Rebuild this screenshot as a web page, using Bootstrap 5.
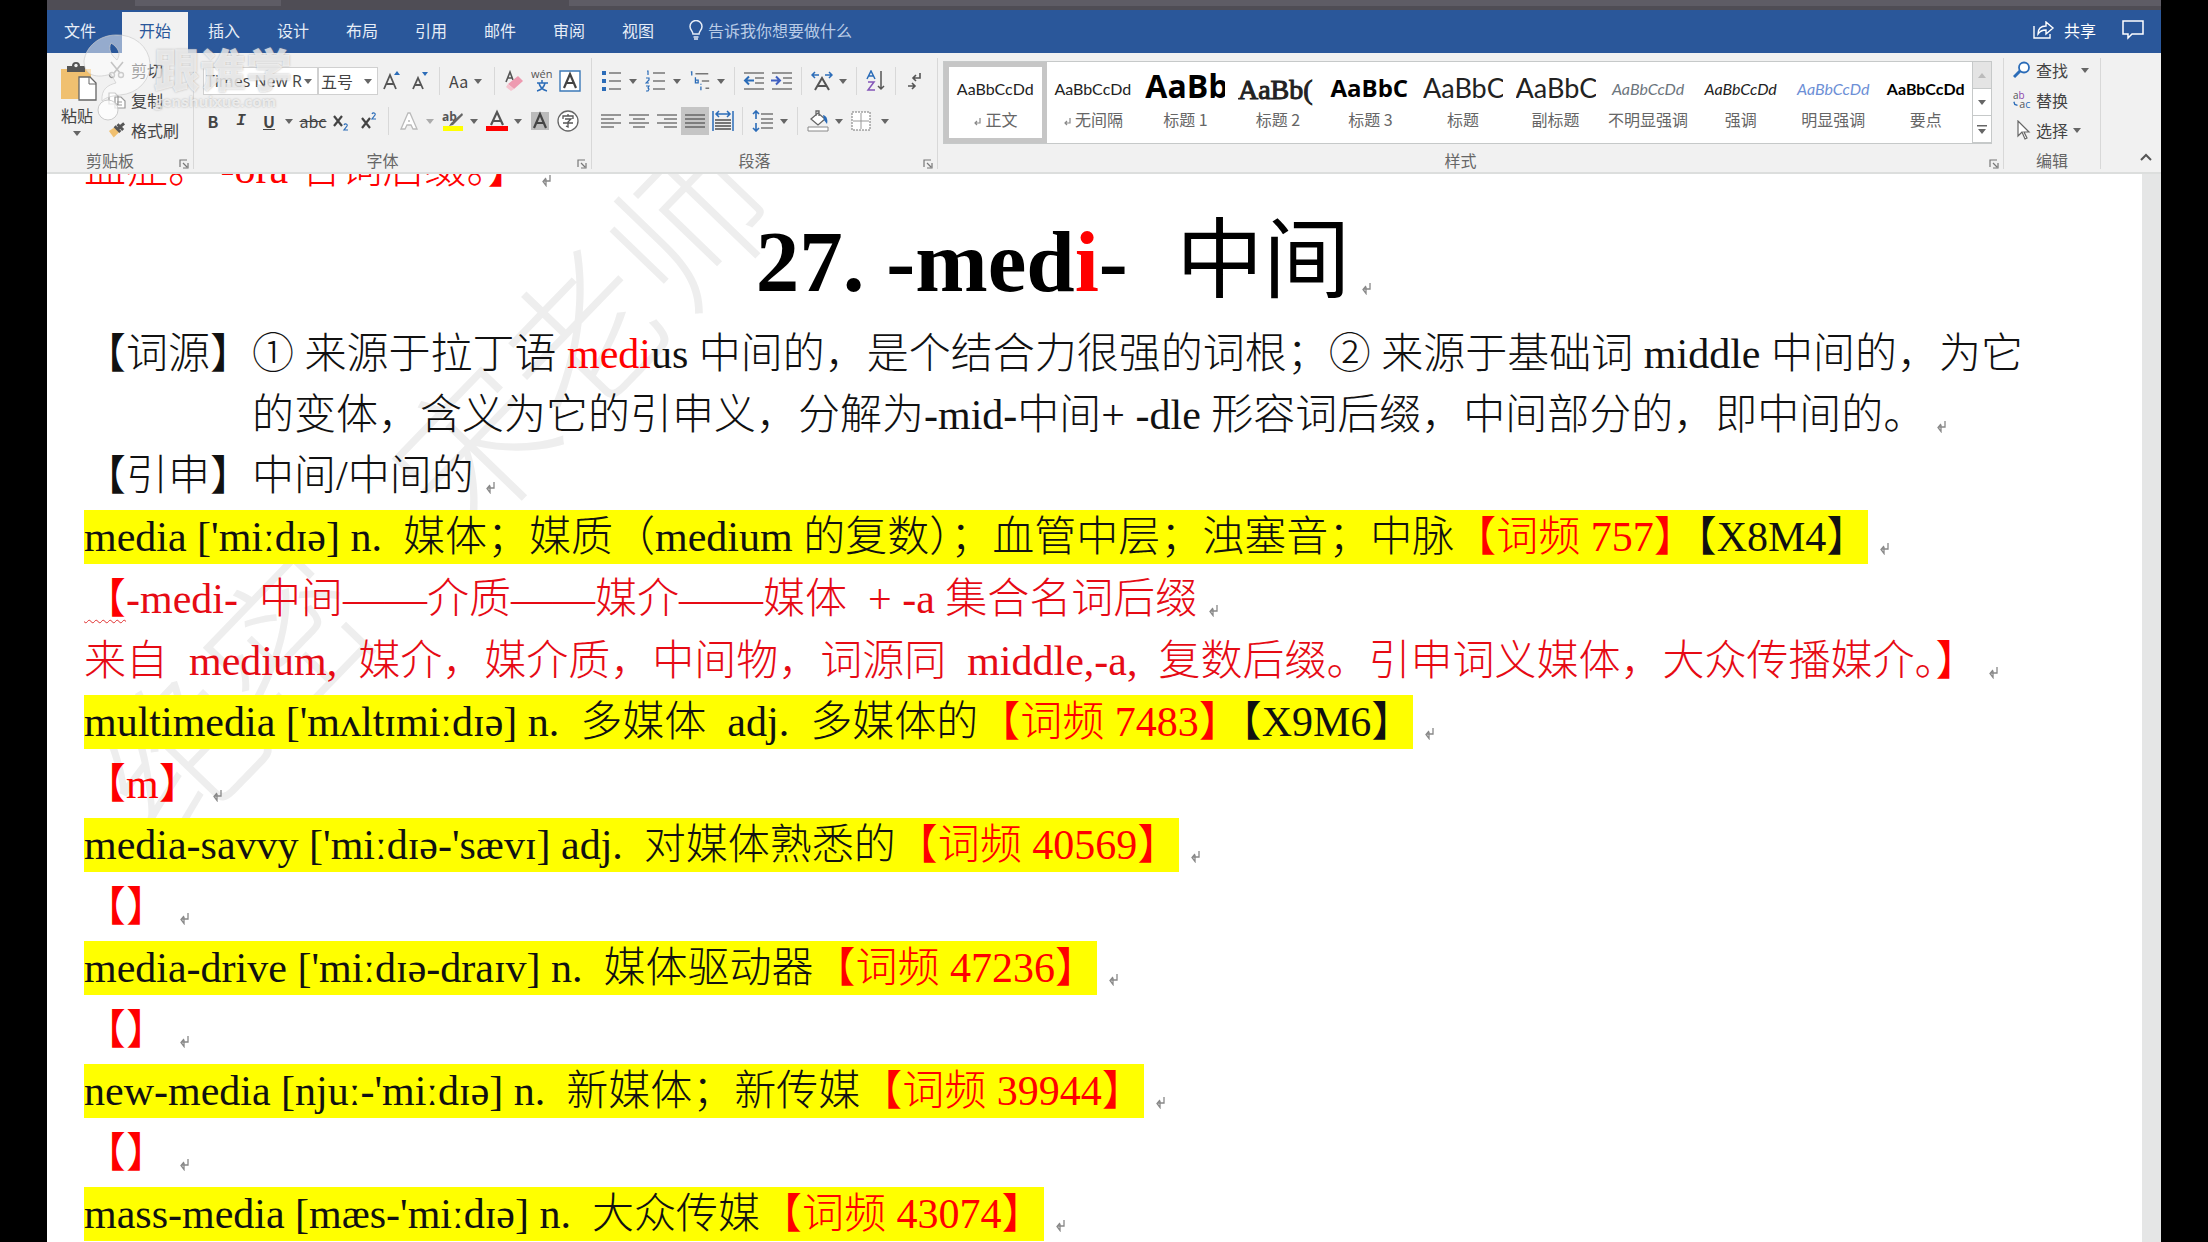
<!DOCTYPE html>
<html lang="zh-CN">
<head>
<meta charset="utf-8">
<meta name="viewport" content="width=device-width, initial-scale=1">
<title>27. -medi- 中间</title>
<link href="https://cdn.jsdelivr.net/npm/bootstrap@5.3.0/dist/css/bootstrap.min.css" rel="stylesheet">
<style>
  body { background: #000; font-family: "Noto Sans CJK SC", sans-serif; font-size: 16px; line-height: 24px; color: #444; }
  .app-shell { margin: 0 47px; height: 100vh; overflow: hidden; background: #f1f1f1; }
  button { color: inherit; line-height: inherit; }

  .title-strip { height: 10px; background: #4f4d55; }
  .title-strip span { height: 6px; background: #5e5c65; }
  .title-strip .strip-a { width: 146px; margin-left: 88px; }
  .title-strip .strip-b { margin-left: 288px; }

  .tab-bar { background: #2a579a; height: 43px; color: #fff; }
  .tab-bar .nav { gap: 3px; }
  .tab-bar .nav-link { width: 66px; height: 41px; padding: 0; line-height: 36px; text-align: center; color: #e6edf7; border-radius: 0; }
  .tab-bar .nav-link.active { background: #f1f1f1; color: #2a579a; }
  .tab-bar .file-tab { margin-right: 6px; }
  .tell-me { color: #b9cbe6; margin-left: 18px; }
  .share-area { gap: 26px; padding-right: 16px; }
  .tab-bar .rib-tool { height: 40px; align-self: flex-start; }

  .ribbon { height: 121px; border-bottom: 2px solid #dcdedd; }
  .rib-group { position: relative; padding: 3px 5px 0; border-right: 1px solid #d8d8d8; margin: 5px 0; height: 111px; }
  .rib-label { height: 24px; margin-top: 7px; padding-right: 20px; text-align: center; color: #666; }
  .rib-launch { position: absolute; right: 4px; bottom: 0; width: 10px; height: 10px; }
  .rib-row { height: 40px; }
  .rib-btn { width: 28px; height: 28px; padding: 0; border: 0; background: none; display: flex; align-items: center; justify-content: center; }
  .rib-btn.wide { width: 44px; gap: 6px; justify-content: flex-start; padding-left: 4px; }
  .rib-btn.pressed { background: #c5c5c5; }
  .rib-btn svg, .rib-tool svg { flex: none; }
  .rib-sep { width: 1px; height: 28px; margin: 0 5px; background: #d8d8d8; }
  .caret { width: 0; height: 0; border: 4px solid transparent; border-top: 5px solid #666; border-bottom: 0; flex: none; }
  .rib-tool { border: 0; background: none; padding: 0; height: 30px; display: flex; align-items: center; gap: 5px; white-space: nowrap; }
  .rib-stack { height: 80px; }
  .rib-stack .tool-col { margin-top: -6px; }
  .rib-input { height: 28px; border: 1px solid #d0d0d0; background: #fff; border-radius: 0; appearance: none; padding: 0 2px; font-size: 16px; line-height: 24px; color: #444; }
  .rib-pick { position: relative; }
  .rib-pick .caret { position: absolute; right: 6px; top: 12px; pointer-events: none; }
  .pick-face { width: 115px; font-family: "Open Sans", sans-serif; }
  .pick-size { width: 60px; }

  .clip-group { width: 147px; }
  .paste-btn { width: 50px; border: 0; background: none; padding: 0; display: flex; flex-direction: column; align-items: center; margin-right: 6px; }
  .paste-btn .caret { margin-top: 4px; }
  .font-group { width: 398px; }
  .para-group { width: 346px; }
  .style-group { width: 1066px; }
  .edit-group { width: 97px; }
  .edit-group .rib-label { padding-right: 0; }
  .style-group .rib-label { margin-top: 4px; }

  .gallery { height: 83px; border: 1px solid #c6c9c9; background: #fff; margin-right: 6px; }
  .gal-item { flex: 1 1 0; min-width: 0; border: 0; background: none; padding: 0; height: 81px; display: flex; flex-direction: column; align-items: center; color: #666; white-space: nowrap; }
  .gal-item.chosen { border: 5px solid #c6c6c6; }
  .gal-item.chosen .gal-sample { height: 40px; line-height: 44px; }
  .gal-sample { height: 45px; width: 80px; overflow: hidden; text-align: center; font: 16px/54px "Lato", sans-serif; color: #222; }
  .gal-sample.h-one { font: bold 32px/48px "Open Sans", sans-serif; color: #000; text-align: left; }
  .gal-sample.h-two { font: 28px/56px "Liberation Serif", serif; -webkit-text-stroke: 1px #222; text-align: left; }
  .gal-sample.h-three { font: bold 24px/52px "Open Sans", sans-serif; color: #000; text-align: left; }
  .gal-sample.h-title { font: 27px/52px "Lato", sans-serif; text-align: left; }
  .tone-blue { color: #6d8fd6; }
  .gal-scroll { width: 19px; border-left: 1px solid #c6c9c9; }
  .gal-scroll button { border: 0; border-bottom: 1px solid #c6c9c9; background: #fff; height: 27px; padding: 0; display: flex; align-items: center; justify-content: center; }
  .gal-scroll button:first-child { background: #e4e4e4; }

  .doc-wrap { background: #e5e6e6; padding-right: 19px; height: 1068px; }
  .doc-page { position: relative; height: 100%; overflow: hidden; background: #fff; padding: 0 107px 0 37px; font: 42px/61px "Liberation Serif", "Noto Sans CJK SC", serif; color: #111; }
  .doc-page p { margin: 0; white-space: pre; font-weight: 300; position: relative; }
  .doc-page .carry-line { margin-top: -35px; }
  .doc-page h1 { margin: 0; padding-left: 8px; font: bold 87px/124px "Liberation Serif", "Noto Sans CJK SC", serif; color: #000; text-align: center; white-space: pre; position: relative; }
  .doc-page h1 .cjk-head { font-weight: 400; margin-left: 5px; }
  .doc-page .hang { padding-left: 168px; text-indent: -168px; }
  .doc-page .note-line { line-height: 62px; color: #e60a14; }
  .doc-page .ink-red { color: #f00; }
  .hi { background: #ff0; padding: 4px 0; }
  .squiggle { text-decoration: underline wavy #e03030 1px; text-underline-offset: 6px; }
  .para-mark { width: 9px; height: 13px; margin-left: 12px; vertical-align: -4px; }
  .doc-mark { position: absolute; left: 142px; top: 535px; transform: rotate(-46deg); transform-origin: 0 100%; font-size: 156px; line-height: 160px; font-weight: 300; color: #eee; white-space: nowrap; }
  .doc-mark span { margin-left: 110px; }

  .brand { position: absolute; left: 82px; top: 34px; pointer-events: none; }
  .brand-words { left: 72px; top: 9px; position: absolute; color: rgba(255,255,255,.7); text-shadow: 0 0 2px rgba(130,130,130,.6); font-weight: 900; white-space: nowrap; }
  .brand-name { font-size: 46px; line-height: 48px; }
  .brand-url { font: bold 15px/20px "Open Sans", sans-serif; }
</style>
<script src="https://cdn.jsdelivr.net/npm/bootstrap@5.3.0/dist/js/bootstrap.bundle.min.js" defer></script>
</head>
<body>
<svg class="d-none" aria-hidden="true">
  <symbol id="pm" viewBox="0 0 9 13"><path d="M8 1v6H2M4 4L1 7.500l3 4V5" fill="none" stroke="#888" stroke-width="1.300"/></symbol>
  <symbol id="launch" viewBox="0 0 10 10"><path d="M1 8V1h7M4 4l4 4M9 4v5H4" fill="none" stroke="#777" stroke-width="1.200"/></symbol>
  <symbol id="ret" viewBox="0 0 9 10"><path d="M7 1v5H2M4 4L2 6l2 2" fill="none" stroke="#888" stroke-width="1.200"/></symbol>
</svg>
<div class="app-shell d-flex flex-column">
  <div class="title-strip d-flex"><span class="strip-a"></span><span class="strip-b flex-grow-1"></span></div>

  <header class="tab-bar d-flex align-items-center flex-shrink-0">
    <nav class="nav align-self-end flex-nowrap" aria-label="功能区">
      <a class="nav-link file-tab" href="#">文件</a>
      <a class="nav-link active" href="#">开始</a>
      <a class="nav-link" href="#">插入</a>
      <a class="nav-link" href="#">设计</a>
      <a class="nav-link" href="#">布局</a>
      <a class="nav-link" href="#">引用</a>
      <a class="nav-link" href="#">邮件</a>
      <a class="nav-link" href="#">审阅</a>
      <a class="nav-link" href="#">视图</a>
    </nav>
    <button class="rib-tool tell-me">
      <svg width="14" height="20" viewBox="0 0 14 20"><path d="M4 14c0-3-3-4-3-7.500a6 6 0 0 1 12 0C13 10 10 11 10 14zM4.500 17h5M5 19h4" fill="none" stroke="#e6edf7" stroke-width="1.500"/></svg>
      <span>告诉我你想要做什么</span>
    </button>
    <div class="share-area d-flex ms-auto align-self-start">
      <button class="rib-tool text-white">
        <svg width="22" height="18" viewBox="0 0 22 18"><path d="M1 5v12h16v-4M5 13c0-5 3-8 8-8V1l7 6-7 6V9c-4 0-6 1-8 4z" fill="none" stroke="#fff" stroke-width="1.400"/></svg>
        <span class="ms-1">共享</span>
      </button>
      <button class="rib-tool" aria-label="批注">
        <svg width="23" height="20" viewBox="0 0 23 20"><path d="M1 1h20v13H10l-4 4v-4H1z" fill="none" stroke="#fff" stroke-width="1.500"/></svg>
      </button>
    </div>
  </header>

  <div class="ribbon d-flex flex-shrink-0">
    <section class="rib-group clip-group">
      <div class="rib-stack d-flex">
        <button class="paste-btn">
          <svg width="40" height="42" viewBox="0 0 40 42"><path d="M4 8h30v30H4z" fill="#f0c070"/><path d="M10 5h5a4 4 0 0 1 8 0h5v6H10z" fill="#555"/><circle cx="19" cy="4.500" r="1.700" fill="#f1f1f1"/><path d="M22 16h11l6 6v17H22z" fill="#fff" stroke="#666" stroke-width="1.300"/><path d="M32 16v7h7" fill="none" stroke="#666"/></svg>
          <span>粘贴</span>
          <i class="caret"></i>
        </button>
        <div class="tool-col">
          <button class="rib-tool" disabled>
            <svg width="18" height="18" viewBox="0 0 18 18"><path d="M3 1l9 11M15 1L6 12" stroke="#888" stroke-width="1.600"/><circle cx="4" cy="14" r="2.500" fill="none" stroke="#999" stroke-width="1.400"/><circle cx="13" cy="14" r="2.500" fill="none" stroke="#999" stroke-width="1.400"/></svg>剪切
          </button>
          <button class="rib-tool" disabled>
            <svg width="18" height="18" viewBox="0 0 18 18"><path d="M1 2h6l3 3v8H1zM7 6h6l4 4v7H7zM9 11h5M9 14h5" fill="#fff" stroke="#999" stroke-width="1.200"/></svg>复制
          </button>
          <button class="rib-tool">
            <svg width="18" height="18" viewBox="0 0 19 18"><path d="M1 10l6-4 5 5-6 6z" fill="#f0c070"/><path d="M7 5l6 6M11 7l6-5M10 3l6 6" stroke="#555" stroke-width="3"/></svg>格式刷
          </button>
        </div>
      </div>
      <div class="rib-label">剪贴板</div>
      <svg class="rib-launch"><use href="#launch"/></svg>
    </section>

    <section class="rib-group font-group">
      <div class="rib-row d-flex align-items-center">
        <div class="rib-pick ms-1"><select class="rib-input pick-face" aria-label="字体"><option>Times New R</option></select><i class="caret"></i></div>
        <div class="rib-pick"><select class="rib-input pick-size" aria-label="字号"><option>五号</option></select><i class="caret"></i></div>
        <button class="rib-btn" aria-label="增大字号"><svg width="20" height="22" viewBox="0 0 20 22"><path d="M2 19L8 5l6 14M4 14h8" fill="none" stroke="#555" stroke-width="1.800"/><path d="M12 5l3-4 3 4z" fill="#2b6cb8"/></svg></button>
        <button class="rib-btn" aria-label="减小字号"><svg width="18" height="22" viewBox="0 0 18 22"><path d="M2 19L7 8l5 11M4 15h6" fill="none" stroke="#555" stroke-width="1.800"/><path d="M11 2h6l-3 4z" fill="#2b6cb8"/></svg></button>
        <i class="rib-sep"></i>
        <button class="rib-btn wide" aria-label="更改大小写"><span>Aa</span><i class="caret"></i></button>
        <i class="rib-sep"></i>
        <button class="rib-btn" aria-label="清除格式"><svg width="22" height="22" viewBox="0 0 22 22"><path d="M3 12L7 2l3 8M4 8h5" fill="none" stroke="#555" stroke-width="1.600"/><path d="M5 14l10-8 5 5-9 8z" fill="#ee9ab0"/><path d="M5 14l6 5-3 2-5-4z" fill="#f6c4cf"/></svg></button>
        <button class="rib-btn" aria-label="拼音指南"><svg width="22" height="24" viewBox="0 0 22 24"><text x="0" y="9" font-size="11" fill="#555" font-family="Open Sans">wén</text><path d="M6 14h11M11 11v3M8 14c1 5 4 7 8 8M14 14c-1 5-4 7-8 8" fill="none" stroke="#2b6cb8" stroke-width="1.500"/></svg></button>
        <button class="rib-btn" aria-label="字符边框"><svg width="22" height="22" viewBox="0 0 22 22"><path d="M1 1h20v20H1z" fill="#fff" stroke="#3d7ab8" stroke-width="1.400"/><path d="M5 18l6-14 6 14M7 13h8" fill="none" stroke="#444" stroke-width="2.200"/></svg></button>
      </div>
      <div class="rib-row d-flex align-items-center">
        <button class="rib-btn fw-bold">B</button>
        <button class="rib-btn fst-italic fw-bold font-monospace">I</button>
        <button class="rib-btn wide"><b class="text-decoration-underline ms-1">U</b><i class="caret ms-1"></i></button>
        <button class="rib-btn"><s>abc</s></button>
        <button class="rib-btn" aria-label="下标"><svg width="18" height="20" viewBox="0 0 18 20"><path d="M2 5l8 10M10 5L2 15" stroke="#444" stroke-width="2.200"/><path d="M12 14c1-2 4-1 3 1l-3 4h4" fill="none" stroke="#2b6cb8" stroke-width="1.200"/></svg></button>
        <button class="rib-btn" aria-label="上标"><svg width="18" height="20" viewBox="0 0 18 20"><path d="M2 7l8 10M10 7L2 17" stroke="#444" stroke-width="2.200"/><path d="M12 3c1-2 4-1 3 1l-3 4h4" fill="none" stroke="#2b6cb8" stroke-width="1.200"/></svg></button>
        <i class="rib-sep"></i>
        <button class="rib-btn wide" aria-label="文本效果"><svg width="22" height="22" viewBox="0 0 22 22"><path d="M3 19L10 3h2l7 16h-4l-2-4H9l-2 4zM10 11h2" fill="#fff" stroke="#bbb" stroke-width="1.300"/></svg><i class="caret opacity-50"></i></button>
        <button class="rib-btn wide" aria-label="突出显示"><svg width="22" height="24" viewBox="0 0 22 24"><text x="0" y="12" font-size="12" font-weight="bold" fill="#555" font-family="Open Sans">ab</text><path d="M20 4L9 14l-2 3 4-1L21 6z" fill="#666"/><path d="M1 17h20v5H1z" fill="#ff0"/></svg><i class="caret"></i></button>
        <button class="rib-btn wide" aria-label="字体颜色"><svg width="22" height="24" viewBox="0 0 22 24"><path d="M5 16l6-13 6 13M7 12h8" fill="none" stroke="#555" stroke-width="2.200"/><path d="M0 17h22v5H0z" fill="#f00"/></svg><i class="caret"></i></button>
        <button class="rib-btn" aria-label="字符底纹"><svg width="20" height="20" viewBox="0 0 20 20"><path d="M1 1h18v18H1z" fill="#bbb"/><path d="M4 17l6-14 6 14M6 12h8" fill="none" stroke="#444" stroke-width="2.200"/></svg></button>
        <button class="rib-btn" aria-label="带圈字符"><svg width="22" height="22" viewBox="0 0 22 22"><circle cx="11" cy="11" r="10" fill="#fff" stroke="#666" stroke-width="1.300"/><path d="M11 4v2M6 9V6h10v3M8 9h6l-3 3v5l-2-1M6 13h10" fill="none" stroke="#555" stroke-width="1.300"/></svg></button>
      </div>
      <div class="rib-label">字体</div>
      <svg class="rib-launch"><use href="#launch"/></svg>
    </section>

    <section class="rib-group para-group">
      <div class="rib-row d-flex align-items-center">
        <button class="rib-btn wide" aria-label="项目符号"><svg width="22" height="22" viewBox="0 0 22 22"><path d="M8 3h12M8 11h12M8 19h12" stroke="#777" stroke-width="1.600"/><path d="M1 1h4v4H1zM1 9h4v4H1zM1 17h4v4H1z" fill="#2b6cb8"/></svg><i class="caret"></i></button>
        <button class="rib-btn wide" aria-label="编号"><svg width="22" height="22" viewBox="0 0 22 22"><path d="M8 3h12M8 11h12M8 19h12" stroke="#777" stroke-width="1.600"/><path d="M2 1h1v4M1 8h3v2l-3 3h3M1 16h3l-1 2 1 1-1 2H1" fill="none" stroke="#2b6cb8" stroke-width="1.200"/></svg><i class="caret"></i></button>
        <button class="rib-btn wide" aria-label="多级列表"><svg width="22" height="22" viewBox="0 0 24 22"><path d="M7 3h14M14 11h8M18 19h4" stroke="#777" stroke-width="1.600"/><path d="M2 1h1v4M7 7v6h3v-3H7M13 14v1M13 17v4" fill="none" stroke="#2b6cb8" stroke-width="1.400"/></svg><i class="caret"></i></button>
        <i class="rib-sep"></i>
        <button class="rib-btn" aria-label="减少缩进"><svg width="22" height="20" viewBox="0 0 22 20"><path d="M1 2h20M12 7h9M12 12h9M1 18h20" stroke="#777" stroke-width="1.600"/><path d="M11 9.500H2M6 5.500l-4 4 4 4" fill="none" stroke="#2b6cb8" stroke-width="2"/></svg></button>
        <button class="rib-btn" aria-label="增加缩进"><svg width="22" height="20" viewBox="0 0 22 20"><path d="M1 2h20M12 7h9M12 12h9M1 18h20" stroke="#777" stroke-width="1.600"/><path d="M0 9.500h9M5 5.500l4 4-4 4" fill="none" stroke="#3f5fc0" stroke-width="2"/></svg></button>
        <i class="rib-sep"></i>
        <button class="rib-btn wide" aria-label="中文版式"><svg width="22" height="20" viewBox="0 0 22 20"><path d="M4 19l7-12 7 12M7 15h8" fill="none" stroke="#555" stroke-width="2"/><path d="M8 4H2M4 1L1 4l3 3M14 4h6M18 1l3 3-3 3" fill="none" stroke="#2b6cb8" stroke-width="1.500"/></svg><i class="caret"></i></button>
        <i class="rib-sep"></i>
        <button class="rib-btn" aria-label="排序"><svg width="20" height="22" viewBox="0 0 20 22"><path d="M1 9l4-8 4 8M2 6h6" fill="none" stroke="#2b6cb8" stroke-width="1.500"/><path d="M2 12h6l-6 8h7" fill="none" stroke="#8456b8" stroke-width="1.500"/><path d="M15 1v18M12 16l3 3 3-3" fill="none" stroke="#555" stroke-width="1.500"/></svg></button>
        <i class="rib-sep"></i>
        <button class="rib-btn" aria-label="显示编辑标记"><svg width="16" height="20" viewBox="0 0 16 20"><path d="M13 2v5H7M9 4L6 7l3 3M1 15h7M5 12l3 3-3 3" fill="none" stroke="#555" stroke-width="1.600"/></svg></button>
      </div>
      <div class="rib-row d-flex align-items-center">
        <button class="rib-btn" aria-label="左对齐"><svg width="20" height="16" viewBox="0 0 20 16"><path d="M0 2h20M0 6h13M0 10h20M0 14h13" stroke="#777" stroke-width="1.500"/></svg></button>
        <button class="rib-btn" aria-label="居中"><svg width="20" height="16" viewBox="0 0 20 16"><path d="M0 2h20M4 6h12M0 10h20M4 14h12" stroke="#777" stroke-width="1.500"/></svg></button>
        <button class="rib-btn" aria-label="右对齐"><svg width="20" height="16" viewBox="0 0 20 16"><path d="M0 2h20M7 6h13M0 10h20M7 14h13" stroke="#777" stroke-width="1.500"/></svg></button>
        <button class="rib-btn pressed" aria-label="两端对齐"><svg width="20" height="16" viewBox="0 0 20 16"><path d="M0 2h20M0 6h20M0 10h20M0 14h20" stroke="#666" stroke-width="1.500"/></svg></button>
        <button class="rib-btn" aria-label="分散对齐"><svg width="22" height="22" viewBox="0 0 22 22"><path d="M1 1v20M21 1v20M4 4h14M7 1L4 4l3 3M15 1l3 3-3 3" fill="none" stroke="#2b6cb8" stroke-width="1.500"/><path d="M3 10h16M3 13h16M3 16h16M3 19h16" stroke="#777" stroke-width="2"/></svg></button>
        <i class="rib-sep"></i>
        <button class="rib-btn wide" aria-label="行距"><svg width="22" height="22" viewBox="0 0 22 22"><path d="M9 4h12M9 9h12M9 13h12M9 18h12" stroke="#777" stroke-width="1.500"/><path d="M4 1v8M1 4l3-3 3 3M4 13v8M1 18l3 3 3-3" fill="none" stroke="#2b6cb8" stroke-width="1.600"/></svg><i class="caret"></i></button>
        <i class="rib-sep"></i>
        <button class="rib-btn wide" aria-label="底纹"><svg width="22" height="22" viewBox="0 0 22 22"><path d="M4 9l7-6 7 6-7 6zM9 6V1h3v5" fill="#fff" stroke="#666" stroke-width="1.300"/><path d="M16 5c4 1 5 5 4 9l-3-4z" fill="#2b6cb8"/><path d="M1 17h20v4H1z" fill="#fff" stroke="#888"/></svg><i class="caret"></i></button>
        <button class="rib-btn wide" aria-label="边框"><svg width="20" height="20" viewBox="0 0 20 20"><path d="M1 1h18v18H1z" fill="#fff" stroke="#777" stroke-dasharray="2 1"/><path d="M10 2v16M2 10h16" stroke="#999"/></svg><i class="caret ms-1"></i></button>
      </div>
      <div class="rib-label">段落</div>
      <svg class="rib-launch"><use href="#launch"/></svg>
    </section>

    <section class="rib-group style-group">
      <div class="gallery d-flex">
        <button class="gal-item chosen"><span class="gal-sample">AaBbCcDd</span><span><svg width="9" height="10"><use href="#ret"/></svg> 正文</span></button>
        <button class="gal-item"><span class="gal-sample">AaBbCcDd</span><span><svg width="9" height="10"><use href="#ret"/></svg> 无间隔</span></button>
        <button class="gal-item"><span class="gal-sample h-one">AaBb</span><span>标题 1</span></button>
        <button class="gal-item"><span class="gal-sample h-two">AaBb(</span><span>标题 2</span></button>
        <button class="gal-item"><span class="gal-sample h-three">AaBbC</span><span>标题 3</span></button>
        <button class="gal-item"><span class="gal-sample h-title">AaBbC</span><span>标题</span></button>
        <button class="gal-item"><span class="gal-sample h-title">AaBbC</span><span>副标题</span></button>
        <button class="gal-item"><span class="gal-sample fst-italic text-secondary">AaBbCcDd</span><span>不明显强调</span></button>
        <button class="gal-item"><span class="gal-sample fst-italic">AaBbCcDd</span><span>强调</span></button>
        <button class="gal-item"><span class="gal-sample fst-italic tone-blue">AaBbCcDd</span><span>明显强调</span></button>
        <button class="gal-item"><span class="gal-sample fw-bold text-black">AaBbCcDd</span><span>要点</span></button>
        <div class="gal-scroll d-flex flex-column flex-shrink-0">
          <button aria-label="上一行"><svg width="8" height="5"><path d="M0 5l4-5 4 5z" fill="#bbb"/></svg></button>
          <button aria-label="下一行"><i class="caret"></i></button>
          <button aria-label="其他"><svg width="10" height="9"><path d="M0 0h10v1.500H0zM1 4h8L5 9z" fill="#666"/></svg></button>
        </div>
      </div>
      <div class="rib-label">样式</div>
      <svg class="rib-launch"><use href="#launch"/></svg>
    </section>

    <section class="rib-group edit-group">
      <div class="rib-stack ps-1 d-flex"><div class="tool-col">
        <button class="rib-tool"><svg width="18" height="18" viewBox="0 0 18 18"><circle cx="11" cy="6.500" r="5" fill="#fff" stroke="#2b6cb8" stroke-width="1.800"/><path d="M7 10l-6 6" stroke="#2b6cb8" stroke-width="3"/></svg>查找<i class="caret ms-2"></i></button>
        <button class="rib-tool"><svg width="18" height="20" viewBox="0 0 20 20"><text x="0" y="9" font-size="11" font-family="Open Sans" fill="#555">a<tspan fill="#8e44ad">b</tspan></text><text x="7" y="19" font-size="12" font-family="Open Sans" fill="#555">a<tspan fill="#2b6cb8">c</tspan></text><path d="M1 12l1 3 3 1" fill="none" stroke="#2b6cb8" stroke-width="1.500"/></svg><span>替换</span></button>
        <button class="rib-tool"><svg width="18" height="20" viewBox="0 0 18 20"><path d="M5 1v15l4-4 3 7 2-1-3-6h5z" fill="#fff" stroke="#666" stroke-width="1.200"/></svg>选择<i class="caret"></i></button>
      </div></div>
      <div class="rib-label">编辑</div>
    </section>
    <button class="rib-tool ms-auto align-self-end me-2" aria-label="折叠功能区"><svg width="14" height="9" viewBox="0 0 14 9"><path d="M2 7l5-5 5 5" fill="none" stroke="#555" stroke-width="2"/></svg></button>
  </div>

  <div class="doc-wrap flex-shrink-0">
    <main class="doc-page">
      <div class="doc-mark" aria-hidden="true">绝密<span>宋老师</span></div>
      <p class="carry-line ink-red">血症。 -ora 名词后缀。】<svg class="para-mark"><use href="#pm"/></svg></p>
      <h1>27. -med<span class="ink-red">i</span>-  <span class="cjk-head">中间</span><svg class="para-mark"><use href="#pm"/></svg></h1>
      <p class="hang">【词源】① 来源于拉丁语 <span class="ink-red">medi</span>us 中间的，是个结合力很强的词根；② 来源于基础词 middle 中间的，为它
的变体，含义为它的引申义，分解为-mid-中间+ -dle 形容词后缀，中间部分的，即中间的。<svg class="para-mark"><use href="#pm"/></svg></p>
      <p>【引申】中间/中间的<svg class="para-mark"><use href="#pm"/></svg></p>
      <p><span class="hi">media ['miːdɪə] n.  媒体；媒质（medium 的复数）；血管中层；浊塞音；中脉<span class="ink-red">【词频 757】</span>【X8M4】</span><svg class="para-mark"><use href="#pm"/></svg></p>
      <p class="note-line"><span class="squiggle ink-red">【</span>-medi-  中间——介质——媒介——媒体  + -a 集合名词后缀<svg class="para-mark"><use href="#pm"/></svg></p>
      <p class="note-line">来自  medium,  媒介，媒介质，中间物，词源同  middle,-a,  复数后缀。引申词义媒体，大众传播媒介。<span class="ink-red">】</span><svg class="para-mark"><use href="#pm"/></svg></p>
      <p><span class="hi">multimedia ['mʌltɪmiːdɪə] n.  多媒体  adj.  多媒体的<span class="ink-red">【词频 7483】</span>【X9M6】</span><svg class="para-mark"><use href="#pm"/></svg></p>
      <p class="note-line ink-red">【m】<svg class="para-mark"><use href="#pm"/></svg></p>
      <p><span class="hi">media-savvy ['miːdɪə-'sævɪ] adj.  对媒体熟悉的<span class="ink-red">【词频 40569】</span></span><svg class="para-mark"><use href="#pm"/></svg></p>
      <p class="note-line ink-red">【】<svg class="para-mark"><use href="#pm"/></svg></p>
      <p><span class="hi">media-drive ['miːdɪə-draɪv] n.  媒体驱动器<span class="ink-red">【词频 47236】</span></span><svg class="para-mark"><use href="#pm"/></svg></p>
      <p class="note-line ink-red">【】<svg class="para-mark"><use href="#pm"/></svg></p>
      <p><span class="hi">new-media [njuː-'miːdɪə] n.  新媒体；新传媒<span class="ink-red">【词频 39944】</span></span><svg class="para-mark"><use href="#pm"/></svg></p>
      <p class="note-line ink-red">【】<svg class="para-mark"><use href="#pm"/></svg></p>
      <p><span class="hi">mass-media [mæs-'miːdɪə] n.  大众传媒<span class="ink-red">【词频 43074】</span></span><svg class="para-mark"><use href="#pm"/></svg></p>
    </main>
  </div>
</div>

<div class="brand" aria-hidden="true">
  <svg width="70" height="90" viewBox="0 0 70 90"><path d="M34 1a32 30 0 0 1 4 60c-8 1-14 2-18 6-1-12 6-16 14-18l-5-9C10 46 2 38 2 27 4 12 18 1 34 1zM29 9c-3 6 0 12 6 17 4-6 2-12-6-17z" fill="#fff" fill-opacity=".5" fill-rule="evenodd" stroke="#ccc" stroke-opacity=".7"/><circle cx="26" cy="76" r="10" fill="#fff" fill-opacity=".75" stroke="#ccc"/></svg>
  <div class="brand-words"><div class="brand-name">跟谁学</div><div class="brand-url">genshuixue.com</div></div>
</div>
</body>
</html>
